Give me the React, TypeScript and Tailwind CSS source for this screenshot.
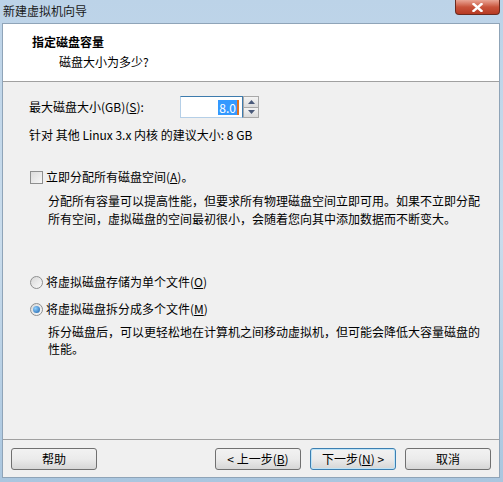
import React, { useState } from 'react';

const font = { fontFamily: '"Noto Sans CJK SC", "Liberation Sans", sans-serif' };

function WinButton({ children, active }: { children: React.ReactNode; active?: boolean }) {
  return (
    <button
      className={`w-[86px] h-[22px] rounded-[3px] border text-[12px] text-black flex items-center justify-center bg-gradient-to-b from-[#f2f2f2] via-[#ebebeb] to-[#d6d6d6] ${
        active ? 'border-[#3c7fb1] shadow-[inset_0_0_0_1px_#bfe4f7]' : 'border-[#707070]'
      }`}
    >
      {children}
    </button>
  );
}

export default function App() {
  const [split, setSplit] = useState(true);

  return (
    <div className="w-[503px] h-[482px] relative overflow-hidden bg-gradient-to-b from-[#bcd3e8] via-[#c9dcec] to-[#aac6df]" style={font}>
      {/* Title bar */}
      <div className="h-[23px] flex items-center justify-between pl-[3px] pr-[3px]">
        <span className="text-[12px] text-[#1a1a1a] leading-none -mt-[1px]">新建虚拟机向导</span>
        <div className="self-start w-[45px] h-[15px] rounded-b-[4px] border border-t-0 border-[#6b2a1e] bg-gradient-to-b from-[#e9a595] via-[#c8533b] to-[#b73a22] flex items-center justify-center">
          <svg width="11" height="9" viewBox="0 0 11 9">
            <path d="M1.5 1 L9.5 8 M9.5 1 L1.5 8" stroke="#fff" strokeWidth="2.4" strokeLinecap="square" />
          </svg>
        </div>
      </div>

      {/* Client area */}
      <div className="absolute left-[2px] right-[3px] top-[23px] bottom-[4px] border border-[#8fa4b8] bg-[#f0f0f0] flex flex-col">
        {/* Header */}
        <div className="h-[58px] bg-white border-b border-[#a0a0a0] pl-[29px] pt-[9px] shrink-0">
          <div className="text-[12px] font-bold text-black leading-[18px]">指定磁盘容量</div>
          <div className="text-[12px] text-black leading-[18px] pl-[27px] mt-[2px]">磁盘大小为多少?</div>
        </div>

        {/* Body */}
        <div className="flex-1 pl-[26px] pr-[20px] text-[12px] text-black">
          <div className="flex items-center mt-[14px] h-[22px]">
            <span className="w-[151px]">
              最大磁盘大小(GB)(<span className="underline">S</span>):
            </span>
            <div className="flex h-[22px]">
              <div className="w-[63px] h-[22px] border border-[#3d7bad] border-b-[#b5cfe7] border-l-[#b5cfe7] bg-white flex items-center justify-end pr-[3px]">
                <span className="bg-[#3399ff] text-white leading-[15px] px-[1px]">8.0</span>
                <span className="w-[2px] h-[15px] bg-[#e07020]"></span>
              </div>
              <div className="flex flex-col w-[16px] h-[22px] border border-[#a9a9a9] bg-[#e8e8e8]">
                <div className="flex-1 border-b border-[#a9a9a9] flex items-center justify-center bg-gradient-to-b from-[#f4f4f4] to-[#dcdcdc]">
                  <svg width="7" height="4" viewBox="0 0 7 4"><path d="M0 4 L3.5 0 L7 4Z" fill="#4a5a7a" /></svg>
                </div>
                <div className="flex-1 flex items-center justify-center bg-gradient-to-b from-[#f4f4f4] to-[#dcdcdc]">
                  <svg width="7" height="4" viewBox="0 0 7 4"><path d="M0 0 L7 0 L3.5 4Z" fill="#4a5a7a" /></svg>
                </div>
              </div>
            </div>
          </div>
          <div className="mt-[8px] leading-[18px]">针对 其他 Linux 3.x 内核 的建议大小: 8 GB</div>

          <div className="flex items-center mt-[24px] h-[18px]">
            <span className="w-[13px] h-[13px] border border-[#8e8f8f] bg-gradient-to-br from-[#dcdcdc] to-[#f7f7f7] mr-[3px] ml-[1px]"></span>
            <span>
              立即分配所有磁盘空间(<span className="underline">A</span>)。
            </span>
          </div>
          <div className="pl-[19px] mt-[6px] leading-[18px] whitespace-nowrap">
            分配所有容量可以提高性能，但要求所有物理磁盘空间立即可用。如果不立即分配
            <br />
            所有空间，虚拟磁盘的空间最初很小，会随着您向其中添加数据而不断变大。
          </div>

          <div className="flex items-center mt-[45px] h-[18px] cursor-default" onClick={() => setSplit(false)}>
            <Radio checked={!split} />
            <span>
              将虚拟磁盘存储为单个文件(<span className="underline">O</span>)
            </span>
          </div>
          <div className="flex items-center mt-[9px] h-[18px] cursor-default" onClick={() => setSplit(true)}>
            <Radio checked={split} />
            <span>
              将虚拟磁盘拆分成多个文件(<span className="underline">M</span>)
            </span>
          </div>
          <div className="pl-[19px] mt-[5px] leading-[17px] whitespace-nowrap">
            拆分磁盘后，可以更轻松地在计算机之间移动虚拟机，但可能会降低大容量磁盘的
            <br />
            性能。
          </div>
        </div>

        {/* Footer */}
        <div className="h-[38px] border-t border-[#a0a0a0] shrink-0 flex items-center px-[8px] pt-[1px]">
          <WinButton>帮助</WinButton>
          <div className="flex-1"></div>
          <div className="flex gap-[9px]">
            <WinButton>
              &lt; 上一步(<span className="underline">B</span>)
            </WinButton>
            <WinButton active>
              下一步(<span className="underline">N</span>) &gt;
            </WinButton>
            <WinButton>取消</WinButton>
          </div>
        </div>
      </div>
    </div>
  );
}

function Radio({ checked }: { checked: boolean }) {
  return (
    <span className="w-[13px] h-[13px] rounded-full border border-[#8e8f8f] bg-gradient-to-br from-[#d8d8d8] to-[#fafafa] mr-[3px] ml-[1px] flex items-center justify-center">
      {checked && <span className="w-[7px] h-[7px] rounded-full bg-[radial-gradient(circle_at_35%_35%,#8fd0ff,#1a5fa8)]"></span>}
    </span>
  );
}
